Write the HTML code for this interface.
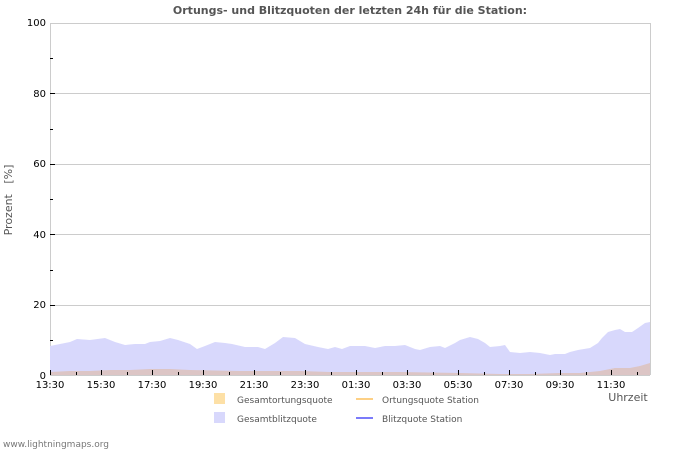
<!DOCTYPE html>
<html><head><meta charset="utf-8"><style>
body{margin:0;background:#fff;width:700px;height:450px;overflow:hidden;font-family:"DejaVu Sans","Liberation Sans",sans-serif;}
</style></head><body>
<svg width="700" height="450" xmlns="http://www.w3.org/2000/svg" font-family="DejaVu Sans, Liberation Sans, sans-serif">
<text x="350" y="14" text-anchor="middle" font-size="11" font-weight="bold" fill="#555">Ortungs- und Blitzquoten der letzten 24h für die Station:</text>
<g stroke="#ccc" stroke-width="1">
<line x1="50" y1="23.5" x2="650" y2="23.5"/>
<line x1="50" y1="93.5" x2="650" y2="93.5"/>
<line x1="50" y1="164.5" x2="650" y2="164.5"/>
<line x1="50" y1="234.5" x2="650" y2="234.5"/>
<line x1="50" y1="305.5" x2="650" y2="305.5"/>
<line x1="50.5" y1="23" x2="50.5" y2="375"/>
<line x1="650.5" y1="23" x2="650.5" y2="375"/>
</g>
<polygon fill="#d8d8fc" points="50,375 50,346 60,344 70,342 77,339 90,340 105,338 115,342 125,345 135,344 145,344 150,342 160,341 170,338 178,340 190,344 197,349 205,346 215,342 225,343 232,344 245,347 258,347 265,349 275,343 283,337 295,338 305,344 318,347 328,349 335,347 342,349 350,346 365,346 375,348 385,346 395,346 405,345 415,349 420,350 430,347 440,346 445,348 455,343 460,340 470,337 478,339 485,343 490,347 500,346 505,345 510,352 520,353 530,352 540,353 545,354 550,355 555,354 565,354 570,352 578,350 590,348 598,343 602,338 608,332 615,330 620,329 625,332 632,332 638,328 645,323 650,322 650,375"/>
<polygon fill="#dcc5c5" points="50,375 50,372 70,371 90,371 110,370 130,370 150,369 170,369 190,370 240,371 300,371 330,372 400,372 460,373 500,374 530,374 560,373 580,373 600,371 615,368 630,368 640,366 650,363 650,375"/>
<line x1="50" y1="375.5" x2="650" y2="375.5" stroke="#ccc"/>
<g stroke="#000" stroke-width="1">
<line x1="50" y1="305.5" x2="55" y2="305.5"/><line x1="50" y1="234.5" x2="55" y2="234.5"/><line x1="50" y1="164.5" x2="55" y2="164.5"/><line x1="50" y1="93.5" x2="55" y2="93.5"/>
<line x1="50" y1="340.5" x2="53" y2="340.5"/><line x1="50" y1="270.5" x2="53" y2="270.5"/><line x1="50" y1="199.5" x2="53" y2="199.5"/><line x1="50" y1="129.5" x2="53" y2="129.5"/><line x1="50" y1="58.5" x2="53" y2="58.5"/>
</g>
<path stroke="#000" stroke-width="1" fill="none" d="M50.5 370V375M76.5 372V375M101.5 370V375M127.5 372V375M152.5 370V375M178.5 372V375M203.5 370V375M229.5 372V375M254.5 370V375M280.5 372V375M305.5 370V375M331.5 372V375M356.5 370V375M382.5 372V375M407.5 370V375M433.5 372V375M458.5 370V375M484.5 372V375M509.5 370V375M535.5 372V375M560.5 370V375M586.5 372V375M611.5 370V375M637.5 372V375"/>
<g font-size="10" fill="#000" text-anchor="end">
<text x="46" y="26">100</text><text x="46" y="97">80</text><text x="46" y="167">60</text><text x="46" y="238">40</text><text x="46" y="308">20</text><text x="46" y="379">0</text>
</g>
<g font-size="10" fill="#000" text-anchor="middle">
<text x="50" y="388">13:30</text><text x="101" y="388">15:30</text><text x="152" y="388">17:30</text><text x="203" y="388">19:30</text><text x="254" y="388">21:30</text><text x="305" y="388">23:30</text><text x="356" y="388">01:30</text><text x="407" y="388">03:30</text><text x="458" y="388">05:30</text><text x="509" y="388">07:30</text><text x="560" y="388">09:30</text><text x="611" y="388">11:30</text>
</g>
<text x="628" y="401" text-anchor="middle" font-size="11" fill="#555">Uhrzeit</text>
<text transform="translate(12,200) rotate(-90)" text-anchor="middle" font-size="11" fill="#555">Prozent&#160;&#160;&#160;[%]</text>
<rect x="214" y="393" width="11" height="11" fill="#fde0a6"/>
<text x="237" y="403" font-size="9" fill="#555">Gesamtortungsquote</text>
<rect x="214" y="412" width="11" height="11" fill="#d8d8fc"/>
<text x="237" y="422" font-size="9" fill="#555">Gesamtblitzquote</text>
<line x1="356" y1="399" x2="373" y2="399" stroke="#fdd085" stroke-width="2"/>
<text x="382" y="403" font-size="9" fill="#555">Ortungsquote Station</text>
<line x1="356" y1="418" x2="373" y2="418" stroke="#7b7bfa" stroke-width="2"/>
<text x="382" y="422" font-size="9" fill="#555">Blitzquote Station</text>
<text x="3" y="447" font-size="9" fill="#777">www.lightningmaps.org</text>
</svg>
</body></html>
